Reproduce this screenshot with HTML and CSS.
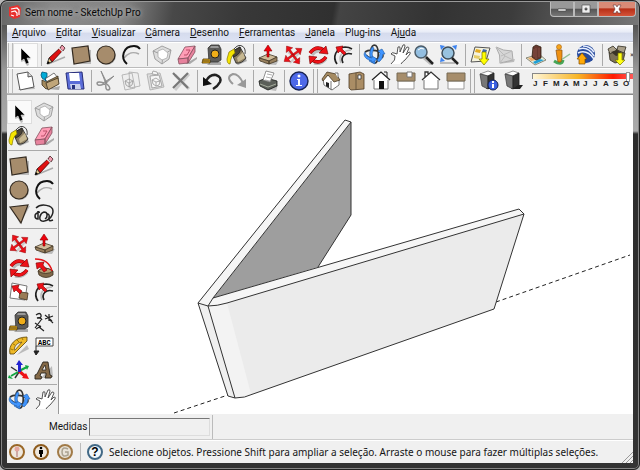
FILE: index.html
```html
<!DOCTYPE html>
<html lang="pt-BR">
<head>
<meta charset="utf-8">
<title>Sem nome - SketchUp Pro</title>
<link rel="stylesheet" href="styles.css">
</head>
<body>
<svg class="defs" aria-hidden="true">
<defs>
<symbol id="select" viewBox="0 0 24 24"><path d="M10 8l8 8-4 1 2 5-2 1-3-5-3 1z" fill="#bbb"/><path d="M8 5v13l3-2 2 5 3-1-2-5h4z" fill="#000" stroke="#fff" stroke-width=".5"/></symbol>
<symbol id="pencil" viewBox="0 0 24 24"><path d="M4 21l17-7" stroke="#aaa" stroke-width="1.500"/><path d="M5 15L17 4l3 2L8 19z" fill="#e01010" stroke="#400" stroke-width=".8"/><path d="M3 21l2-6 3 4z" fill="#e8c88c" stroke="#222" stroke-width=".8"/><path d="M3 21l1-3 2 2z" fill="#000"/><path d="M16 5l2-3 3 3-2 3z" fill="#f09cb0" stroke="#422" stroke-width=".8"/><path d="M15 5l4 4" stroke="#ddd" stroke-width="1.500"/></symbol>
<symbol id="rect" viewBox="0 0 24 24"><path d="M5 5l17 2v14H7z" fill="#bbb"/><path d="M3 5l16-2 2 15-16 3z" fill="#a68c6c" stroke="#332a20" stroke-width="1.200"/></symbol>
<symbol id="circle" viewBox="0 0 24 24"><circle cx="13" cy="13" r="9" fill="#bbb"/><circle cx="12" cy="12" r="9" fill="#a68c6c" stroke="#332a20" stroke-width="1.200"/></symbol>
<symbol id="poly" viewBox="0 0 24 24"><path d="M5 6l18-2-10 18z" fill="#bbb"/><path d="M3 5l18-2-7 18z" fill="#a68c6c" stroke="#332a20" stroke-width="1.200"/></symbol>
<symbol id="arc" viewBox="0 0 24 24"><path d="M5 15c4-5 8-7 15-4" fill="none" stroke="#aaa" stroke-width="1.500"/><path d="M8 21C1 15 4 3 15 3q4 0 6 3" fill="none" stroke="#111" stroke-width="2"/></symbol>
<symbol id="free" viewBox="0 0 24 24"><path d="M4 6C9 1 21 3 21 9c0 6-6 11-11 10-4-1-2-8 2-9 4 0 4 5 1 7" fill="none" stroke="#222" stroke-width="1.500"/><path d="M6 9v8q-3 0-3-3t5-4M15 12q3 0 2 4t4 2" fill="none" stroke="#222" stroke-width="1.500"/></symbol>
<symbol id="component" viewBox="0 0 24 24"><path d="M3 8l9-5 9 4-2 10-8 4-6-5z" fill="#ddd"/><path d="M3 8l9-5 9 4-8 5zM3 8l2 8 7 5 1-9M21 7l-2 9-7 5" fill="none" stroke="#999" stroke-width=".9"/><path d="M8 8l5-2 5 4-1 5-5 2-4-3z" fill="#fff" stroke="#aaa" stroke-width=".8"/></symbol>
<symbol id="eraser" viewBox="0 0 24 24"><path d="M10 21l12-7v2l-7 5z" fill="#aaa"/><path d="M3 16l7-12 10-1-7 12z" fill="#ff9db6" stroke="#84505e" stroke-width=".8"/><path d="M3 16l10-1v5l-9 1zM13 15l7-12v6l-7 11z" fill="#e7829d" stroke="#84505e" stroke-width=".8"/><path d="M11 7h4l-3 5H9" fill="none" stroke="#b94f69"/></symbol>
<symbol id="tape" viewBox="0 0 24 24"><path d="M10 19h11v3H7z" fill="#aaa"/><path d="M8 5l3-3h8l2 4v11l-3 2H9z" fill="#5c5b59" stroke="#333" stroke-width=".8"/><path d="M11 3h7l1 2h-9z" fill="#999"/><circle cx="15" cy="11" r="4" fill="#efad18" stroke="#222"/><path d="M9 16H3l-1 4h8v-3" fill="#efb119" stroke="#453000" stroke-width=".8"/><path d="M4 17v2M6 17v2M8 17v2" stroke="#222" stroke-width=".8"/></symbol>
<symbol id="paint" viewBox="0 0 24 24"><path d="M13 22l9-4-2-4-10 6z" fill="#aaa"/><path d="M9 6q4-5 8-3t3 8" fill="none" stroke="#444"/><path d="M6 9l9-5 6 11q-4 6-10 5z" fill="#8b7d62" stroke="#222" stroke-width=".8"/><path d="M6 9l9-5q2 6-6 10z" fill="#4c4539" stroke="#222" stroke-width=".8"/><path d="M12 15l6-6 2 6-7 4z" fill="#c7b892"/><path d="M4 9l5-3 1 4q-4 2-5 11-3 0-3-5z" fill="#f6e500" stroke="#867900" stroke-width=".7"/></symbol>
<symbol id="push" viewBox="0 0 24 24"><path d="M6 21l14 1 3-5z" fill="#bbb"/><path d="M3 15l9-4 9 3-8 4z" fill="#cfbb99" stroke="#433726" stroke-width=".8"/><path d="M3 15l10 3v3L4 18zM13 18l8-4v4l-8 3z" fill="#98805e" stroke="#433726" stroke-width=".8"/><path d="M12 2L8 8h3v6h2V8h3z" fill="#f0000c" stroke="#800" stroke-width=".6"/></symbol>
<symbol id="head" viewBox="0 0 24 24"><path d="M12 1l4 5h-3v6h-2V6H8z" fill="#ed1018" stroke="#800" stroke-width=".4"/></symbol>
<symbol id="move" viewBox="0 0 24 24"><path d="M7 9l12 10M19 9L9 20" stroke="#ccc" stroke-width="2"/><use href="#head" width="24" height="24" transform="rotate(-36 12 12)"/><use href="#head" width="24" height="24" transform="rotate(54 12 12)"/><use href="#head" width="24" height="24" transform="rotate(144 12 12)"/><use href="#head" width="24" height="24" transform="rotate(234 12 12)"/></symbol>
<symbol id="rotate" viewBox="0 0 24 24"><path d="M6 12q5-6 11-3M20 16q-5 6-12 4" fill="none" stroke="#bbb" stroke-width="3"/><path d="M4 10Q10 2 18 7M20 14q-6 8-14 3" fill="none" stroke="#800" stroke-width="3.500"/><path d="M4 10Q10 2 18 7M20 14q-6 8-14 3" fill="none" stroke="#ee1218" stroke-width="2.500"/><path d="M20 3l2 8-9-1zM4 21l-1-8 8 1z" fill="#ee1218" stroke="#700" stroke-width=".6"/></symbol>
<symbol id="offset" viewBox="0 0 24 24"><path d="M6 21C1 14 5 5 14 4q4 0 7 2M12 20c-3-6 2-11 9-9" fill="none" stroke="#222" stroke-width="1.700"/><path d="M10 20c-3-7 1-12 10-13" fill="none" stroke="#bbb" stroke-width="1.500"/><path d="M5 4l7-1-1 3 4 4-2 2-4-4-2 2z" fill="#ed1018" stroke="#700" stroke-width=".6"/></symbol>
<symbol id="orbit" viewBox="0 0 24 24"><path d="M12 2c6 0 5 18 1 18-5 0-6-16-1-18M3 9c5-4 18-1 18 4 0 4-13 4-17-1" fill="none" stroke="#333" stroke-width="1.700"/><path d="M10 4q-4 6-1 12l-2 2 6 3v-6l-2 1q-2-5 1-11z" fill="#4095ff" stroke="#245da3" stroke-width=".6"/><path d="M3 9q1 5 7 6v-2l5 3-5 4v-2Q2 16 2 11zM16 8l4-2 3 5h-2q0 5-4 8l-2-2q3-3 3-7z" fill="#4095ff" stroke="#245da3" stroke-width=".6"/></symbol>
<symbol id="pan" viewBox="0 0 24 24"><path d="M4 21q5-4 4-8l-4-2q1-2 3-1l3 1 1-7q2-1 2 1v4l3-7q2-1 2 1l-2 7 4-6q2 0 2 1l-3 7 3-3q2 0 1 2l-5 6q-3 2-4 4" fill="#fff" stroke="#444" stroke-width=".9"/></symbol>
<symbol id="zoom" viewBox="0 0 24 24"><path d="M11 16l7 6 3-1-8-7z" fill="#bbb"/><circle cx="9" cy="9" r="6" fill="#93bee0" stroke="#4b5c69" stroke-width="1.500"/><path d="M6 7q3-3 6-1" stroke="#fff" fill="none"/><path d="M14 14l7 7" stroke="#222" stroke-width="2.500"/></symbol>
<symbol id="extents" viewBox="0 0 24 24"><path d="M3 20h15" stroke="#bbb" stroke-width="2"/><path d="M3 2l5 1-4 4zM20 2l-5 1 4 4zM3 19l1-5 4 4z" fill="#3d83ef"/><circle cx="11" cy="10" r="6" fill="#98c2df" stroke="#3d4d59" stroke-width="1.500"/><path d="M15 15l6 6" stroke="#222" stroke-width="2.500"/></symbol>
<symbol id="getmap" viewBox="0 0 24 24"><path d="M7 4l15 1-4 13-15 1z" fill="#f5f3df" stroke="#555"/><path d="M8 6l5 1-1 3-5-1z" fill="#e5ac20"/><path d="M15 6l4 1-1 3-4-1z" fill="#3f6cab"/><path d="M6 12l6 1-1 3-5-1z" fill="#e6cd69"/><path d="M14 9h4v7h3l-5 6-5-6h3z" fill="#ffff00" stroke="#777300" stroke-width=".7"/></symbol>
<symbol id="terrain" viewBox="0 0 24 24"><path d="M5 21l16-2 1-3z" fill="#bbb"/><path d="M3 4q7 4 16 4l1 9-13 3q1-8-4-16z" fill="#d6d6d6" stroke="#aaa"/><path d="M8 13l11-5M3 4l9 9-5 7M12 13l8 4" fill="none" stroke="#bbb"/></symbol>
<symbol id="building" viewBox="0 0 24 24"><path d="M2 15l13-4 7 6-11 5z" fill="#e5efdb" stroke="#746f5b" stroke-width=".8"/><path d="M9 19l6-3 5 1-9 4z" fill="#209fd6"/><path d="M4 15l5-1 3 3-5 1z" fill="#eaa86a"/><path d="M9 4l3-2 5 2v11l-5 2-4-3z" fill="#67382f" stroke="#321" stroke-width=".8"/><path d="M12 5v11M10 6v8M15 5v9" stroke="#8d5748" stroke-width=".8"/></symbol>
<symbol id="person" viewBox="0 0 24 24"><path d="M5 18q8 5 9-1" stroke="#47a657" stroke-width="3" fill="none"/><path d="M12 17l9-6" stroke="#8fbe92" stroke-width="1.500"/><circle cx="10" cy="4" r="2.500" fill="#f5a51c" stroke="#a96312" stroke-width=".6"/><path d="M7 7h6v7l-1 5H9l-1-5z" fill="#ef9112" stroke="#875012" stroke-width=".7"/></symbol>
<symbol id="earth" viewBox="0 0 24 24"><circle cx="12" cy="11" r="9" fill="#284b9d"/><path d="M5 6q9-3 15 7M4 10q9-4 16 6M9 3q7 0 11 6" stroke="#e7efff" stroke-width="1.500" fill="none"/><path d="M8 10l5 6h-2v5H5v-5H3z" fill="#ffaa08" stroke="#7e4c00" stroke-width=".7"/></symbol>
<symbol id="box" viewBox="0 0 24 24"><path d="M4 9l8-3 8 4-2 8-8 2-5-3z" fill="#7c7157" stroke="#302c21" stroke-width=".8"/><path d="M3 6l5-3 4 4-7 4zM13 3l8 1-2 6-7-3z" fill="#aaa08a" stroke="#302c21" stroke-width=".8"/><path d="M6 9l6-2 6 4-7 2z" fill="#3a3428"/><path d="M13 10h4v7h3l-5 5-5-5h3z" fill="#ffff16" stroke="#777300" stroke-width=".7"/></symbol>
<symbol id="new" viewBox="0 0 24 24"><path d="M5 21l17-1-4-12z" fill="#bbb"/><path d="M4 5l11-2 4 4 2 11-14 3z" fill="#fff" stroke="#555"/><path d="M15 3v5l4-1" fill="#ddd" stroke="#555"/></symbol>
<symbol id="open" viewBox="0 0 24 24"><path d="M9 20l12 1 1-4z" fill="#aaa"/><path d="M7 10l9-6 4 5-7 9z" fill="#fff" stroke="#777"/><path d="M4 11l4 2 12-6v8L8 20l-4-4z" fill="#a58b5e" stroke="#392d1c" stroke-width=".8"/><path d="M8 14l12-5 1 6-11 6z" fill="#c0a67a" stroke="#392d1c" stroke-width=".8"/><path d="M4 3l5 1v4L7 9l1 3-4-3-1-3z" fill="#00acd9" stroke="#057" stroke-width=".8"/></symbol>
<symbol id="save" viewBox="0 0 24 24"><path d="M3 4l16-1 2 17H5z" fill="#5b6dd8" stroke="#272d78"/><path d="M6 4h10l1 8H7z" fill="#fff"/><path d="M7 15h10l1 5H8z" fill="#cbd1ec"/><path d="M9 16h3v4H9z" fill="#25307e"/></symbol>
<symbol id="cut" viewBox="0 0 24 24"><path d="M7 2l5 13 1-1zM20 7L9 14l1 2z" fill="#aaa" stroke="#888" stroke-width=".9"/><path d="M10 14q-6-2-7 0 0 4 7 1M12 14q-1 7 2 7 4-1-1-6" fill="none" stroke="#929292" stroke-width="1.500"/></symbol>
<symbol id="copy" viewBox="0 0 24 24"><path d="M10 3l9 1 2 13-10 2zM3 6l10-2 3 15-10 2z" fill="#eee" stroke="#aaa" stroke-width=".8"/><path d="M6 12l4-2 4 2-1 4-3 2-3-2zl4 2 4-2M10 14v4" fill="none" stroke="#999" stroke-width=".8"/></symbol>
<symbol id="paste" viewBox="0 0 24 24"><path d="M3 5l13-1 4 14-14 3z" fill="#ddd" stroke="#aaa" stroke-width=".8"/><path d="M6 7l9-1 3 11-10 2zM8 5l1-3 4 1 1 3z" fill="#f6f6f6" stroke="#999" stroke-width=".8"/><path d="M8 11l4-2 4 3-1 4-3 1-3-2zl4 2 4-1M12 13v4" fill="none" stroke="#999" stroke-width=".8"/></symbol>
<symbol id="delete" viewBox="0 0 24 24"><path d="M6 6l14 14M20 5L6 21" stroke="#ccc" stroke-width="3"/><path d="M4 4l15 15M19 4L4 19" stroke="#777" stroke-width="2.200"/></symbol>
<symbol id="undo" viewBox="0 0 24 24"><path d="M6 12q4-7 10-6 6 2 4 7-2 4-7 7" fill="none" stroke="#222" stroke-width="2.500"/><path d="M3 8v9l9-2z" fill="#111"/></symbol>
<symbol id="redo" viewBox="0 0 24 24"><path d="M18 14Q14 5 8 5 0 8 8 15" fill="none" stroke="#999" stroke-width="2"/><path d="M21 10v9l-9-3z" fill="#999"/></symbol>
<symbol id="print" viewBox="0 0 24 24"><path d="M8 20l12 2 2-6z" fill="#bbb"/><path d="M3 12l7-3 11 3v5l-9 4-8-4z" fill="#5b5f59" stroke="#171917" stroke-width=".8"/><path d="M7 11l3-9 8 2-4 9z" fill="#fff" stroke="#777" stroke-width=".8"/><path d="M11 5l5 1M10 8l5 1M9 11l5 1" stroke="#999" stroke-width=".8"/><path d="M4 15l8 3 8-3" stroke="#a6ad9d" fill="none"/></symbol>
<symbol id="info" viewBox="0 0 24 24"><circle cx="12" cy="12" r="9" fill="#4e69e8" stroke="#172354" stroke-width="1.400"/><circle cx="12" cy="7" r="1.500" fill="#fff"/><path d="M10 10h3v6h2v1H9v-1h2v-5h-1z" fill="#fff"/></symbol>
<symbol id="iso" viewBox="0 0 24 24"><path d="M4 10l5-4 11 4v6l-7 5-8-5z" fill="#fff" stroke="#555" stroke-width=".8"/><path d="M12 12v9" stroke="#555" stroke-width=".8"/><path d="M3 10l5-7 9 2 4 6-6 2-6-7-5 6z" fill="#a58b62" stroke="#493a24" stroke-width=".8"/><path d="M7 13v4l3 2v-5z" fill="#222"/><path d="M16 4h3v5" fill="#fff" stroke="#555" stroke-width=".8"/></symbol>
<symbol id="top" viewBox="0 0 24 24"><path d="M5 5l11-2 4 2v15l-13 1-2-2z" fill="#aa8d65" stroke="#4c3a25" stroke-width=".8"/><path d="M12 4v17" stroke="#594932" stroke-width=".8"/><path d="M14 6h3v4h-3z" fill="#fff" stroke="#333" stroke-width=".8"/></symbol>
<symbol id="front" viewBox="0 0 24 24"><path d="M5 10h14v10H5z" fill="#fff" stroke="#777"/><path d="M3 11l9-8 9 8" fill="#fff" stroke="#222" stroke-width="1.300"/><path d="M15 3h3v5" fill="none" stroke="#222"/><path d="M10 12h5v8h-5z" fill="#111"/></symbol>
<symbol id="right" viewBox="0 0 24 24"><path d="M4 12h16v8H4z" fill="#fff" stroke="#999"/><path d="M3 4h18v8H3z" fill="#a68d6b" stroke="#776a54"/><path d="M13 3h5v5h-5z" fill="#fff" stroke="#777"/></symbol>
<symbol id="back" viewBox="0 0 24 24"><path d="M5 10h14v10H5z" fill="#fff" stroke="#777"/><path d="M3 11l9-8 9 8M6 8V3h3v3" fill="#fff" stroke="#333" stroke-width="1.300"/></symbol>
<symbol id="left" viewBox="0 0 24 24"><path d="M4 12h16v8H4z" fill="#fff" stroke="#999"/><path d="M3 4h18v8H3z" fill="#a68d6b" stroke="#776a54"/></symbol>
<symbol id="cube" viewBox="0 0 24 24"><path d="M11 16h11l-3 4h-9z" fill="#222"/><path d="M4 5l8-3 6 2-6 3z" fill="#fff" stroke="#777" stroke-width=".8"/><path d="M4 5l8 2v13l-6-3z" fill="#777" stroke="#444" stroke-width=".8"/><path d="M12 7l6-3v12l-6 4z" fill="#333" stroke="#222" stroke-width=".8"/></symbol>
<symbol id="cubeinfo" viewBox="0 0 24 24"><use href="#cube"/><circle cx="17" cy="16" r="5" fill="#3a60e2" stroke="#142253"/><path d="M16 12h2v2h-2zM16 15h2v4h-2z" fill="#fff"/></symbol>
<symbol id="follow" viewBox="0 0 24 24"><path d="M6 15q6-6 15 0v4q-7 5-14 0z" fill="#7f684a" stroke="#3e3121" stroke-width=".8"/><path d="M6 15q6-6 15 0-7 5-15 0" fill="#b69b74" stroke="#3e3121" stroke-width=".8"/><path d="M3 3q14 0 17 12" fill="none" stroke="#e31317" stroke-width="1.500"/><path d="M4 7l8-1-1 3 4 5-3 2-4-5-3 2z" fill="#ed1018" stroke="#700" stroke-width=".6"/></symbol>
<symbol id="scale" viewBox="0 0 24 24"><path d="M5 3l15 3-2 14-15-2z" fill="#fff" stroke="#777"/><path d="M13 12l8 1-1 7-8-2z" fill="#9a7c56" stroke="#423321" stroke-width=".8"/><path d="M5 6l7-1-1 3 4 3-2 3-4-4-2 2z" fill="#ed1018" stroke="#700" stroke-width=".6"/></symbol>
<symbol id="dimension" viewBox="0 0 24 24"><path d="M9 10L3 18M3 13l6 4M4 19l5-3M13 5l7 6M13 9l8-3M17 4v7M17 9l4 4M7 17l5 4" stroke="#222" stroke-width="1.200"/><path d="M4 5q4-3 5 0t-4 3q4-1 5 2" stroke="#222" fill="none" stroke-width="1.300"/></symbol>
<symbol id="protractor" viewBox="0 0 24 24"><path d="M10 21l12-6-2-4z" fill="#bbb"/><path d="M3 20C1 11 8 3 20 3v4L7 20z" fill="#eeb927" stroke="#5a4307" stroke-width=".8"/><path d="M7 16q1-7 8-8l-7 8z" fill="#eee" stroke="#6e540f" stroke-width=".8"/><path d="M4 15l2 1M6 10l2 1M10 6l2 2M15 4l1 2" stroke="#886500" stroke-width=".8"/></symbol>
<symbol id="label" viewBox="0 0 24 24"><path d="M4 4h17v8H4z" fill="#fff" stroke="#444"/><path d="M4 12v7M2 17l2 4 3-4z" fill="#222" stroke="#222"/><text x="6" y="11" font-size="7" font-family="Liberation Mono" font-weight="bold">ABC</text></symbol>
<symbol id="axes" viewBox="0 0 24 24"><path d="M4 9l6 4M12 14l-4 6" stroke="#333" stroke-width="1.500"/><path d="M12 13l8-4M4 18l7-4" stroke="#10a640" stroke-width="2"/><path d="M18 7l4 1-2 4zM2 17l4 4-5-1z" fill="#10a640"/><path d="M12 13l7 6" stroke="#ee1218" stroke-width="3"/><path d="M15 20l7 1-3-6z" fill="#ee1218"/><path d="M12 2L9 7h2v7h3V7h2z" fill="#2224d0"/></symbol>
<symbol id="text3d" viewBox="0 0 24 24"><path d="M9 20L20 8l1 11z" fill="#bbb"/><path d="M3 17l2-1 6-12h5l2 13 2 1-1 2h-6l1-3v-2H9l-1 3 2 1-1 2H3z" fill="#846947" stroke="#29251c" stroke-width=".9"/><path d="M10 12h4l-1-5z" fill="#eee" stroke="#29251c" stroke-width=".8"/></symbol>
</defs>
</svg>

<div class="window">
<header class="titlebar">
<svg class="logo" viewBox="0 0 14 14" aria-hidden="true"><path d="M1 2l9-2 3 3-1 9-6 2-5-3z" fill="#e7322f"/><path d="M3 4l6-1 2 2v5M3 7l4-1 2 2v3M3 10l3 1" fill="none" stroke="#fff" stroke-width="1.200"/></svg>
<h1>Sem nome - SketchUp Pro</h1>
<div class="controls">
<button aria-label="Minimizar"><svg viewBox="0 0 14 10"><path d="M3 5h8v2H3z" fill="#fff" stroke="#444" stroke-width=".6"/></svg></button>
<button aria-label="Maximizar"><svg viewBox="0 0 14 10"><path d="M3 1h8v8H3zM6 4v2h2V4z" fill="#eee" fill-rule="evenodd" stroke="#444" stroke-width=".6"/></svg></button>
<button class="close" aria-label="Fechar"><svg viewBox="0 0 14 10"><path d="M3 1h3l1 2 1-2h3L9 5l2 4H8L7 7 6 9H3l2-4z" fill="#fff" stroke="#633" stroke-width=".6"/></svg></button>
</div>
</header>

<div class="client">
<nav class="menu">
<a href="#"><u>A</u>rquivo</a><a href="#"><u>E</u>ditar</a><a href="#"><u>V</u>isualizar</a><a href="#"><u>C</u>âmera</a><a href="#"><u>D</u>esenho</a><a href="#"><u>F</u>erramentas</a><a href="#"><u>J</u>anela</a><a href="#">Plug-ins</a><a href="#">Aj<u>u</u>da</a>
</nav>

<div class="toolbar" role="toolbar" aria-label="Ferramentas">
<button class="active" aria-label="Selecionar"><svg><use href="#select"/></svg></button><i></i>
<button aria-label="Linha"><svg><use href="#pencil"/></svg></button>
<button aria-label="Retângulo"><svg><use href="#rect"/></svg></button>
<button aria-label="Círculo"><svg><use href="#circle"/></svg></button>
<button aria-label="Arco"><svg><use href="#arc"/></svg></button><i></i>
<button aria-label="Criar componente"><svg><use href="#component"/></svg></button>
<button aria-label="Borracha"><svg><use href="#eraser"/></svg></button>
<button aria-label="Fita métrica"><svg><use href="#tape"/></svg></button>
<button aria-label="Pintura"><svg><use href="#paint"/></svg></button><i></i>
<button aria-label="Empurrar/Puxar"><svg><use href="#push"/></svg></button>
<button aria-label="Mover"><svg><use href="#move"/></svg></button>
<button aria-label="Girar"><svg><use href="#rotate"/></svg></button>
<button aria-label="Equidistância"><svg><use href="#offset"/></svg></button><i></i>
<button aria-label="Órbita"><svg><use href="#orbit"/></svg></button>
<button aria-label="Panorâmica"><svg><use href="#pan"/></svg></button>
<button aria-label="Zoom"><svg><use href="#zoom"/></svg></button>
<button aria-label="Modelo centralizado"><svg><use href="#extents"/></svg></button><i></i>
<button aria-label="Adicionar local"><svg><use href="#getmap"/></svg></button>
<button aria-label="Alternar terreno"><svg><use href="#terrain"/></svg></button><i></i>
<button aria-label="Adicionar edifício"><svg><use href="#building"/></svg></button>
<button aria-label="Texturas de foto"><svg><use href="#person"/></svg></button>
<button aria-label="Visualizar no Google Earth"><svg><use href="#earth"/></svg></button><i></i>
<button aria-label="Obter modelos"><svg><use href="#box"/></svg></button>
<span class="more">»</span>
</div>

<div class="toolbar" role="toolbar" aria-label="Padrão">
<button aria-label="Novo"><svg><use href="#new"/></svg></button>
<button aria-label="Abrir"><svg><use href="#open"/></svg></button>
<button aria-label="Salvar"><svg><use href="#save"/></svg></button><i></i>
<button aria-label="Cortar"><svg><use href="#cut"/></svg></button>
<button aria-label="Copiar"><svg><use href="#copy"/></svg></button>
<button aria-label="Colar"><svg><use href="#paste"/></svg></button>
<button aria-label="Apagar"><svg><use href="#delete"/></svg></button><i></i>
<button aria-label="Desfazer"><svg><use href="#undo"/></svg></button>
<button aria-label="Refazer"><svg><use href="#redo"/></svg></button><i></i>
<button aria-label="Imprimir"><svg><use href="#print"/></svg></button><i></i>
<button aria-label="Informações do modelo"><svg><use href="#info"/></svg></button><b class="grip"></b>
<button aria-label="Isométrica"><svg><use href="#iso"/></svg></button>
<button aria-label="Superior"><svg><use href="#top"/></svg></button>
<button aria-label="Frontal"><svg><use href="#front"/></svg></button>
<button aria-label="Direita"><svg><use href="#right"/></svg></button>
<button aria-label="Posterior"><svg><use href="#back"/></svg></button>
<button aria-label="Esquerda"><svg><use href="#left"/></svg></button><b class="grip"></b>
<button aria-label="Configurações de sombra"><svg><use href="#cubeinfo"/></svg></button>
<button aria-label="Exibir sombras"><svg><use href="#cube"/></svg></button>
<div class="season">
<input type="range" min="1" max="12" value="11.6" step="any" aria-label="Data da sombra">
<div class="months" aria-hidden="true"><span>J</span><span>F</span><span>M</span><span>A</span><span>M</span><span>J</span><span>J</span><span>A</span><span>S</span><span>O</span></div>
</div>
</div>

<main class="work">
<aside class="palette" role="toolbar" aria-label="Conjunto grande de ferramentas">
<button class="active" aria-label="Selecionar"><svg><use href="#select"/></svg></button>
<button aria-label="Criar componente"><svg><use href="#component"/></svg></button>
<button aria-label="Pintura"><svg><use href="#paint"/></svg></button>
<button aria-label="Borracha"><svg><use href="#eraser"/></svg></button><i></i>
<button aria-label="Retângulo"><svg><use href="#rect"/></svg></button>
<button aria-label="Linha"><svg><use href="#pencil"/></svg></button>
<button aria-label="Círculo"><svg><use href="#circle"/></svg></button>
<button aria-label="Arco"><svg><use href="#arc"/></svg></button>
<button aria-label="Polígono"><svg><use href="#poly"/></svg></button>
<button aria-label="À mão livre"><svg><use href="#free"/></svg></button><i></i>
<button aria-label="Mover"><svg><use href="#move"/></svg></button>
<button aria-label="Empurrar/Puxar"><svg><use href="#push"/></svg></button>
<button aria-label="Girar"><svg><use href="#rotate"/></svg></button>
<button aria-label="Siga-me"><svg><use href="#follow"/></svg></button>
<button aria-label="Escala"><svg><use href="#scale"/></svg></button>
<button aria-label="Equidistância"><svg><use href="#offset"/></svg></button><i></i>
<button aria-label="Fita métrica"><svg><use href="#tape"/></svg></button>
<button aria-label="Dimensões"><svg><use href="#dimension"/></svg></button>
<button aria-label="Transferidor"><svg><use href="#protractor"/></svg></button>
<button aria-label="Texto"><svg><use href="#label"/></svg></button>
<button aria-label="Eixos"><svg><use href="#axes"/></svg></button>
<button aria-label="Texto 3D"><svg><use href="#text3d"/></svg></button><i></i>
<button aria-label="Órbita"><svg><use href="#orbit"/></svg></button>
<button aria-label="Panorâmica"><svg><use href="#pan"/></svg></button>
</aside>
<svg class="model" viewBox="59 95 574 319" role="img" aria-label="Modelo 3D">
<path d="M174 413l54-18M496 302l134-47" fill="none" stroke="#222" stroke-dasharray="4 3"/>
<path d="M351 122v93l-33 52-105 31z" fill="#9e9e9e"/>
<path d="M345 120l6 2-138 176-5 8-10-4z" fill="#f5f5f5"/>
<path d="M213 298L519 209l6 5-298 89-19 3z" fill="#f6f6f6"/>
<path d="M208 306l19-3 297-89-30 95-241 85-18 4z" fill="#ebebeb"/>
<path d="M208 306l19-3 24 91-16 4z" fill="#f3f3f3"/>
<path d="M198 303l10 3 27 92-8-3z" fill="#efefef"/>
<path d="M198 303L345 120l6 2-138 176M208 306l5-8L519 209l5 5-297 89q-10 3-19 3l-10-3 30 93 7 2-27-92M235 398q10 0 18-4l241-85 30-95M351 122v93l-33 52" fill="none" stroke="#333"/>
</svg>
</main>

<div class="measure"><label for="vcb">Medidas</label><input id="vcb" type="text"></div>

<footer class="status">
<svg viewBox="0 0 18 18" aria-hidden="true"><circle cx="9" cy="9" r="7" fill="#eee8df" stroke="#9a6828" stroke-width="2"/><circle cx="9" cy="6" r="2.500" fill="#e4a79f"/><path d="M9 8v6" stroke="#c49692" stroke-width="1.500"/></svg>
<svg viewBox="0 0 18 18" aria-hidden="true"><circle cx="9" cy="9" r="7" fill="#eee8df" stroke="#8e5c1e" stroke-width="2"/><circle cx="9" cy="5" r="1.300"/><path d="M7 7h4v4h-1v3H8v-3H7z"/></svg>
<svg viewBox="0 0 18 18" aria-hidden="true"><circle cx="9" cy="9" r="7" fill="#e9e3d8" stroke="#a17b48" stroke-width="2"/><path d="M12 6q-6-3-6 3t6 3V9H9" fill="none" stroke="#aaa290" stroke-width="1.500"/></svg>
<i></i>
<button class="help" aria-label="Ajuda">?</button>
<p>Selecione objetos. Pressione Shift para ampliar a seleção. Arraste o mouse para fazer múltiplas seleções.</p>
<svg class="resize" viewBox="0 0 12 12" aria-hidden="true"><path d="M1 12L12 1M5 12l7-7M9 12l3-3" stroke="#999"/></svg>
</footer>
</div>
</div>
</body>
</html>
```

FILE: styles.css
```css
* { box-sizing: border-box; }

body {
  margin: 0;
  background: #b8b8b8;
  color: #151515;
  font: 10px/16px Roboto, "Noto Sans", sans-serif;
}

.defs { position: absolute; width: 0; height: 0; }
svg { display: block; }
button { padding: 0; border: 0; background: none; }

.window {
  display: flex;
  flex-direction: column;
  height: 100vh;
  padding: 0 6px 6px;
  border: 1px solid #222;
  border-radius: 7px 7px 6px 6px;
  background: linear-gradient(#383838 0, #555 24px, #999 70px, #aaa 130px, #2c2c2c 133px, #333 100%);
  box-shadow: inset 0 0 0 1px #858585;
}

.titlebar {
  display: flex;
  flex: none;
  height: 24px;
  margin: 0 -5px;
  padding-left: 6px;
  border-top: 1px solid #999;
  border-radius: 6px 6px 0 0;
  background: linear-gradient(100deg, #666 0, #8b8b8b 8%, #858585 19%, #484848 27%, #383838 38%, #303030 52%, #444 53%, #333 68%, #3c3c3c 80%, #777 100%);
}

.logo { width: 14px; height: 14px; margin-top: 3px; }

h1 {
  margin: 3px 0 0 3px;
  color: #080808;
  font-size: 10px;
  font-weight: 400;
  line-height: 16px;
  text-shadow: 0 0 4px #bbb, 0 0 8px #aaa;
}

.controls { display: flex; height: 15px; margin: 0 2px 0 auto; }
.controls button {
  display: grid;
  place-items: center;
  width: 24px;
  border: 1px solid #bbb;
  border-top: 0;
  background: linear-gradient(#999 0 45%, #555 50%, #777);
}
.controls button:first-child { border-radius: 0 0 0 4px; }
.controls .close {
  width: 38px;
  border-radius: 0 0 4px 0;
  background: linear-gradient(#d98a76 0 40%, #b82f17 50%, #d4543a);
}
.controls svg { width: 14px; height: 10px; }

.client {
  display: flex;
  flex: 1;
  flex-direction: column;
  min-height: 0;
  background: #f0f0f0;
}

.menu {
  display: flex;
  gap: 10px;
  height: 17px;
  padding-left: 5px;
  border-bottom: 1px solid #c2c6d2;
  background: linear-gradient(#fff, #e7ebf6 45%, #d5dbed 50%, #dce2f3);
}
.menu a { color: inherit; text-decoration: none; }
u { text-underline-offset: 1px; }

.toolbar {
  display: flex;
  flex: none;
  align-items: center;
  height: 26px;
  overflow: hidden;
  padding-left: 1px;
  border-top: 1px solid #fff;
  border-bottom: 1px solid #bbb;
}
.toolbar::before {
  flex: none;
  width: 3px;
  height: 24px;
  border: solid #bbb;
  border-width: 0 1px;
  content: "";
}
.toolbar button { flex: none; width: 25px; height: 25px; }
.toolbar svg, .palette svg { width: 24px; height: 24px; }
.toolbar .active, .palette .active {
  border: 1px solid #ddd;
  background: #fafafa;
}
.active svg { margin: -1px; }
.toolbar i {
  flex: none;
  width: 6px;
  height: 22px;
  background: linear-gradient(#aaa, #aaa) center / 1px 100% no-repeat;
}
.grip {
  flex: none;
  width: 5px;
  height: 24px;
  margin: 0 1px;
  border: solid #aaa;
  border-width: 0 1px;
}
.more { font-size: 8px; }

.season { flex: 1; min-width: 0; padding-left: 6px; }
.season input {
  display: block;
  width: 100%;
  height: 6px;
  margin: 0;
  appearance: none;
  border-top: 1px solid #888;
  border-left: 1px solid #888;
  background: linear-gradient(90deg, #fff6d8, #f7b526 45%, #ff1a00 80%, #ff5a5a);
}
.season input::-webkit-slider-thumb {
  appearance: none;
  width: 4px;
  height: 10px;
  border: 1px solid #999;
  background: #fff;
}
.months {
  display: flex;
  padding-left: 1px;
  color: #222;
  font: 700 8px/10px "Liberation Sans", sans-serif;
}
.months span { flex: 0 0 10px; }

.work { display: flex; flex: 1; min-height: 0; background: #fff; }
.palette {
  display: grid;
  grid-template-columns: 25px 25px;
  grid-template-rows: 24px 24px 6px 24px 24px 24px 6px 24px 24px 24px 6px 24px 24px 24px 6px 24px;
  align-content: start;
  width: 52px;
  padding-top: 5px;
  border-top: 1px solid #aaa;
  border-right: 1px solid #999;
  background: #f0f0f0;
}
.palette i {
  grid-column: 1 / 3;
  height: 1px;
  margin: 2px 0 3px 1px;
  background: #aaa;
}
.model { flex: 1; min-width: 0; width: 100%; height: 100%; border-top: 1px solid #888; }

.measure {
  display: flex;
  flex: none;
  align-items: center;
  gap: 2px;
  height: 26px;
  padding-left: 42px;
  border-bottom: 1px solid #ccc;
}
.measure::after { height: 24px; border-left: 1px solid #bbb; content: ""; }
.measure input {
  width: 121px;
  height: 18px;
  border: 1px solid #ddd;
  border-top-color: #777;
  border-left-color: #777;
  background: #f0f0f0;
}

.status {
  display: flex;
  flex: none;
  align-items: center;
  gap: 6px;
  height: 23px;
  padding-left: 1px;
  border-top: 1px solid #fff;
  font-family: "Noto Sans", sans-serif;
}
.status svg { flex: none; width: 18px; height: 18px; }
.status i { flex: none; width: 1px; height: 18px; background: #bbb; }
.help {
  flex: none;
  width: 16px;
  height: 16px;
  border: 2px solid #426986;
  border-radius: 50%;
  background: #f2f8fc;
  font: 700 12px/12px "Liberation Sans", sans-serif;
}
.status p { margin: 0; white-space: nowrap; }
.status .resize { align-self: flex-end; width: 12px; height: 12px; margin-left: auto; }
```
